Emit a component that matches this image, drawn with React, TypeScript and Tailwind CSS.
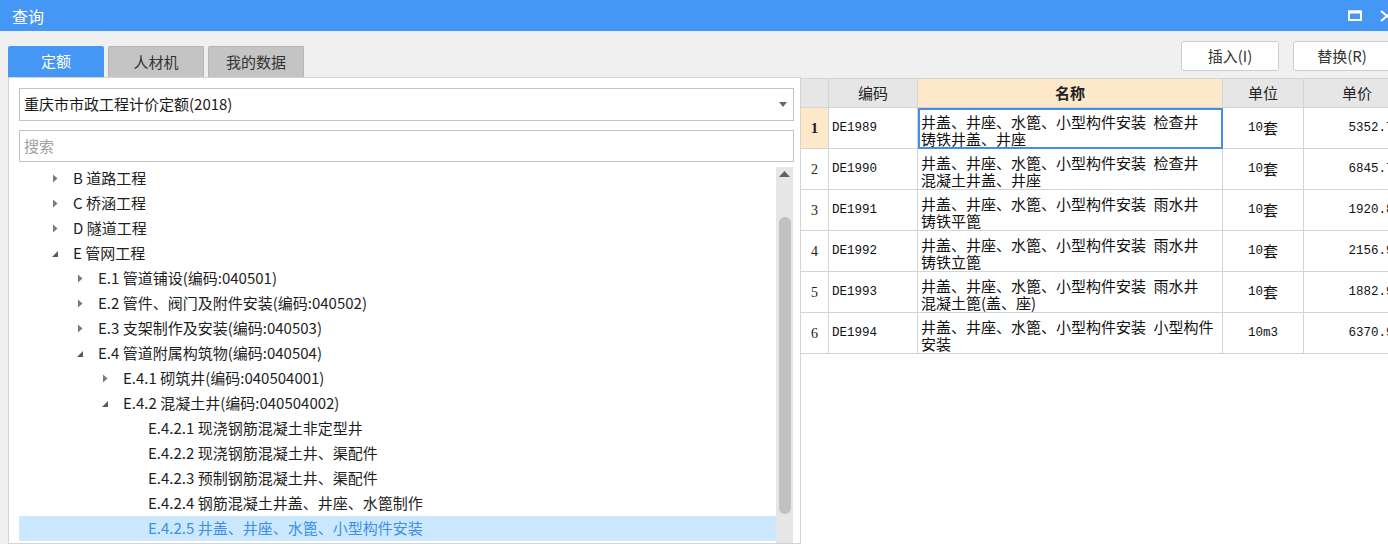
import React from "react";

type Node = { label: string; level: number; arrow: "none" | "collapsed" | "expanded"; selected?: boolean };

const tree: Node[] = [
  { label: "B 道路工程", level: 1, arrow: "collapsed" },
  { label: "C 桥涵工程", level: 1, arrow: "collapsed" },
  { label: "D 隧道工程", level: 1, arrow: "collapsed" },
  { label: "E 管网工程", level: 1, arrow: "expanded" },
  { label: "E.1 管道铺设(编码:040501)", level: 2, arrow: "collapsed" },
  { label: "E.2 管件、阀门及附件安装(编码:040502)", level: 2, arrow: "collapsed" },
  { label: "E.3 支架制作及安装(编码:040503)", level: 2, arrow: "collapsed" },
  { label: "E.4 管道附属构筑物(编码:040504)", level: 2, arrow: "expanded" },
  { label: "E.4.1 砌筑井(编码:040504001)", level: 3, arrow: "collapsed" },
  { label: "E.4.2 混凝土井(编码:040504002)", level: 3, arrow: "expanded" },
  { label: "E.4.2.1 现浇钢筋混凝土非定型井", level: 4, arrow: "none" },
  { label: "E.4.2.2 现浇钢筋混凝土井、渠配件", level: 4, arrow: "none" },
  { label: "E.4.2.3 预制钢筋混凝土井、渠配件", level: 4, arrow: "none" },
  { label: "E.4.2.4 钢筋混凝土井盖、井座、水篦制作", level: 4, arrow: "none" },
  { label: "E.4.2.5 井盖、井座、水篦、小型构件安装", level: 4, arrow: "none", selected: true },
];

const rows = [
  { n: "1", code: "DE1989", l1: "井盖、井座、水篦、小型构件安装\u2002检查井", l2: "铸铁井盖、井座", unit: "10", unitC: "套", price: "5352.72" },
  { n: "2", code: "DE1990", l1: "井盖、井座、水篦、小型构件安装\u2002检查井", l2: "混凝土井盖、井座", unit: "10", unitC: "套", price: "6845.71" },
  { n: "3", code: "DE1991", l1: "井盖、井座、水篦、小型构件安装\u2002雨水井", l2: "铸铁平篦", unit: "10", unitC: "套", price: "1920.86" },
  { n: "4", code: "DE1992", l1: "井盖、井座、水篦、小型构件安装\u2002雨水井", l2: "铸铁立篦", unit: "10", unitC: "套", price: "2156.93" },
  { n: "5", code: "DE1993", l1: "井盖、井座、水篦、小型构件安装\u2002雨水井", l2: "混凝土篦(盖、座)", unit: "10", unitC: "套", price: "1882.95" },
  { n: "6", code: "DE1994", l1: "井盖、井座、水篦、小型构件安装\u2002小型构件", l2: "安装", unit: "10m3", unitC: "", price: "6370.97" },
];

const pl: Record<number, string> = { 1: "pl-[27px]", 2: "pl-[52px]", 3: "pl-[77px]", 4: "pl-[102px]" };

function Arrow({ kind }: { kind: Node["arrow"] }) {
  if (kind === "collapsed")
    return (
      <svg width="6" height="9" viewBox="0 0 6 9">
        <path d="M1 0.5 L5.5 4.5 L1 8.5 Z" fill="#7a7a7a" />
      </svg>
    );
  if (kind === "expanded")
    return (
      <svg width="8" height="8" viewBox="0 0 8 8">
        <path d="M7 1 L7 7 L1 7 Z" fill="#5a5a5a" />
      </svg>
    );
  return null;
}

export default function App() {
  const ui = { fontFamily: '"Noto Sans CJK SC", "Noto Sans", sans-serif' };
  const mono = { fontFamily: '"Liberation Mono", "Noto Sans CJK SC", monospace' };
  return (
    <div className="w-[1388px] h-[544px] overflow-hidden bg-[#f0f0f0] flex flex-col" style={ui}>
      {/* title bar */}
      <div className="h-[31px] shrink-0 bg-[#4597f6] flex items-center pl-[12px] relative">
        <span className="text-white text-[16px] leading-none">查询</span>
        <div className="ml-auto flex items-center gap-[18px] mr-[-6px]">
          <svg width="14" height="11" viewBox="0 0 14 11">
            <rect x="1" y="1.5" width="12" height="8.5" fill="none" stroke="#fff" strokeWidth="2" />
            <rect x="1" y="0.5" width="12" height="3" fill="#fff" />
          </svg>
          <svg width="14" height="12" viewBox="0 0 14 12">
            <path d="M1 1 L13 11 M13 1 L1 11" stroke="#fff" strokeWidth="2" />
          </svg>
        </div>
      </div>

      <div className="flex flex-1 min-h-0">
        {/* left column */}
        <div className="w-[801px] shrink-0 pl-[8px] pt-[15px] flex flex-col">
          <div className="flex gap-[4px] h-[31px]">
            <div className="w-[96px] bg-[#4597f6] rounded-t-[2px] flex items-center justify-center text-white text-[15px]">定额</div>
            <div className="w-[96px] bg-[#c4c4c4] border border-b-0 border-[#b5b5b5] rounded-t-[2px] flex items-center justify-center text-[#333] text-[15px]">人材机</div>
            <div className="w-[96px] bg-[#c4c4c4] border border-b-0 border-[#b5b5b5] rounded-t-[2px] flex items-center justify-center text-[#333] text-[15px]">我的数据</div>
          </div>
          <div className="flex-1 bg-white border border-[#d4d4d4] pt-[10px] pl-[10px] flex flex-col">
            <div className="w-[775px] h-[33px] border border-[#c3c3c3] flex items-center pl-[4px] pr-[6px] text-[15px] text-[#1a1a1a]">
              <span>重庆市市政工程计价定额(2018)</span>
              <svg className="ml-auto" width="8" height="5" viewBox="0 0 8 5">
                <path d="M0 0 L8 0 L4 5 Z" fill="#666" />
              </svg>
            </div>
            <div className="w-[775px] h-[32px] mt-[9px] border border-[#c3c3c3] flex items-center pl-[4px] text-[15px] text-[#a0a0a0]">搜索</div>
            <div className="w-[775px] mt-[5px] flex flex-1 min-h-0">
              <div className="w-[757px] mt-[-1px]">
                {tree.map((n, i) => (
                  <div
                    key={i}
                    className={`h-[25px] flex items-center ${pl[n.level]} ${n.selected ? "bg-[#cce8ff] text-[#3c8ee8]" : "text-[#1e1e1e]"}`}
                  >
                    <div className="w-[18px] h-[25px] flex items-center justify-center">
                      <Arrow kind={n.arrow} />
                    </div>
                    <span className="ml-[9px] text-[15px] whitespace-nowrap">{n.label}</span>
                  </div>
                ))}
              </div>
              <div className="w-[17px] bg-[#e6e6e6] flex flex-col items-center">
                <svg className="mt-[4px]" width="11" height="6" viewBox="0 0 11 6">
                  <path d="M0 6 L5.5 0 L11 6 Z" fill="#5f5f66" />
                </svg>
                <div className="w-[12px] h-[297px] mt-[40px] bg-[#c1c1c1] rounded-full" />
              </div>
            </div>
          </div>
        </div>

        {/* right column */}
        <div className="flex-1 flex flex-col min-w-0">
          <div className="h-[30px] mt-[10px] flex justify-end gap-[14px] mr-[-3px]">
            <div className="w-[98px] h-[30px] bg-white border border-[#cfcfcf] rounded-[3px] flex items-center justify-center text-[15px] text-[#333]">插入(I)</div>
            <div className="w-[98px] h-[30px] bg-white border border-[#cfcfcf] rounded-[3px] flex items-center justify-center text-[15px] text-[#333]">替换(R)</div>
          </div>
          <div className="mt-[7px] flex-1 bg-white border-t border-[#d4d4d4] overflow-hidden">
            <div className="grid grid-cols-[28px_89px_305px_81px_110px] w-[613px]">
              <div className="h-[29px] bg-[#e6e6e6] border-r border-b border-[#d4d4d4]" />
              <div className="h-[29px] bg-[#e6e6e6] border-r border-b border-[#d4d4d4] flex items-center justify-center text-[15px] text-[#222]">编码</div>
              <div className="h-[29px] bg-[#fde8ca] border-r border-b border-[#d4d4d4] flex items-center justify-center text-[15px] font-bold text-[#222]">名称</div>
              <div className="h-[29px] bg-[#e6e6e6] border-r border-b border-[#d4d4d4] flex items-center justify-center text-[15px] text-[#222]">单位</div>
              <div className="h-[29px] bg-[#e6e6e6] border-b border-[#d4d4d4] flex items-center justify-center text-[15px] text-[#222] pr-[4px]">单价</div>
              {rows.map((r, i) => (
                <React.Fragment key={i}>
                  <div
                    className={`h-[41px] border-r border-b border-[#d4d4d4] flex items-center justify-center text-[#222] ${i === 0 ? "bg-[#fde8ca] font-bold" : ""}`}
                    style={{ fontFamily: '"Liberation Serif", serif', fontSize: i === 0 ? "15px" : "14px" }}
                  >
                    {r.n}
                  </div>
                  <div className="h-[41px] border-r border-b border-[#d4d4d4] flex items-center pl-[3px] text-[12.5px] text-[#111]" style={mono}>
                    {r.code}
                  </div>
                  <div
                    className={`h-[41px] border-r border-b border-[#d4d4d4] pl-[3px] pt-[5px] text-[15px] leading-[17px] text-[#111] whitespace-nowrap ${i === 0 ? "outline-2 outline-solid outline-[#3f8ef0] -outline-offset-2" : ""}`}
                  >
                    <div>{r.l1}</div>
                    <div>{r.l2}</div>
                  </div>
                  <div className="h-[41px] border-r border-b border-[#d4d4d4] flex items-center justify-center text-[#111]" style={mono}>
                    <span className="text-[12.5px]">{r.unit}</span>
                    {r.unitC && <span className="text-[15px]" style={ui}>{r.unitC}</span>}
                  </div>
                  <div className="h-[41px] border-b border-[#d4d4d4] flex items-center justify-end pr-[13px] text-[12.5px] text-[#111]" style={mono}>
                    {r.price}
                  </div>
                </React.Fragment>
              ))}
            </div>
          </div>
        </div>
      </div>
    </div>
  );
}
